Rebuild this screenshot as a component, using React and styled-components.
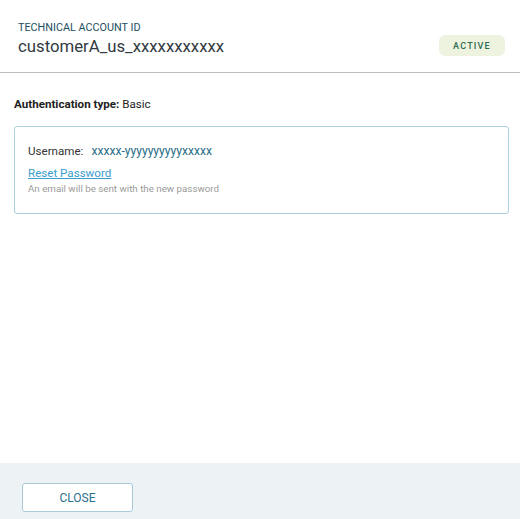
import React from "react";
import styled, { createGlobalStyle } from "styled-components";

const Global = createGlobalStyle`
  html, body { margin: 0; padding: 0; background: #fff; }
  body { font-family: Roboto, "Noto Sans", sans-serif; }
  #root { height: 519px; }
`;

const Dialog = styled.div`
  height: 519px;
  display: flex;
  flex-direction: column;
  background: #fff;
`;

const Header = styled.header`
  display: flex;
  align-items: flex-end;
  justify-content: space-between;
  padding: 21px 15px 15px 18px;
  border-bottom: 1px solid #bdbdbd;
`;

const TitleBlock = styled.div`
  display: flex;
  flex-direction: column;
`;

const Overline = styled.div`
  font-size: 10.8px;
  line-height: 14px;
  color: #1d4f61;
  text-transform: uppercase;
`;

const Title = styled.div`
  font-size: 16.75px;
  line-height: 22px;
  color: #333a3f;
`;

const Badge = styled.span`
  display: inline-flex;
  align-items: center;
  justify-content: center;
  width: 66px;
  height: 21px;
  border-radius: 6px;
  background: #eef3df;
  color: #2d6b50;
  font-size: 9px;
  letter-spacing: 1.2px;
  font-weight: 500;
  margin-bottom: 1px;
`;

const Body = styled.main`
  flex: 1;
  padding: 24px 11px 0 14px;
`;

const AuthLine = styled.div`
  font-size: 11.6px;
  line-height: 14px;
  color: #222;
  margin-bottom: 15px;
`;

const Strong = styled.strong`
  font-weight: 700;
`;

const Card = styled.section`
  border: 1px solid #a9cfe0;
  border-radius: 3px;
  padding: 16px 13px 18px 13px;
  display: flex;
  flex-direction: column;
`;

const Row = styled.div`
  display: flex;
  align-items: baseline;
  gap: 8px;
  font-size: 11.6px;
  line-height: 16px;
  color: #333;
`;

const Value = styled.span`
  font-size: 12.1px;
  color: #2a6e88;
`;

const Link = styled.a`
  margin-top: 7px;
  font-size: 11.6px;
  line-height: 15px;
  color: #3a9dcd;
  text-decoration: underline;
  cursor: pointer;
  align-self: flex-start;
`;

const Hint = styled.div`
  margin-top: 1px;
  font-size: 9.75px;
  line-height: 13px;
  color: #9a9a9a;
`;

const Footer = styled.footer`
  height: 56px;
  background: #edf2f5;
  padding: 20px 0 0 22px;
  box-sizing: border-box;
`;

const Button = styled.button`
  width: 111px;
  height: 29px;
  background: #fff;
  border: 1px solid #a9c9d9;
  border-radius: 3px;
  color: #2a6f8f;
  font-family: Roboto, sans-serif;
  font-size: 12px;
  cursor: pointer;
`;

export default function App() {
  return (
    <>
      <Global />
      <Dialog>
        <Header>
          <TitleBlock>
            <Overline>Technical Account ID</Overline>
            <Title>customerA_us_xxxxxxxxxxx</Title>
          </TitleBlock>
          <Badge>ACTIVE</Badge>
        </Header>
        <Body>
          <AuthLine>
            <Strong>Authentication type:</Strong> Basic
          </AuthLine>
          <Card>
            <Row>
              <span>Username:</span>
              <Value>xxxxx-yyyyyyyyyyxxxxx</Value>
            </Row>
            <Link>Reset Password</Link>
            <Hint>An email will be sent with the new password</Hint>
          </Card>
        </Body>
        <Footer>
          <Button>CLOSE</Button>
        </Footer>
      </Dialog>
    </>
  );
}
